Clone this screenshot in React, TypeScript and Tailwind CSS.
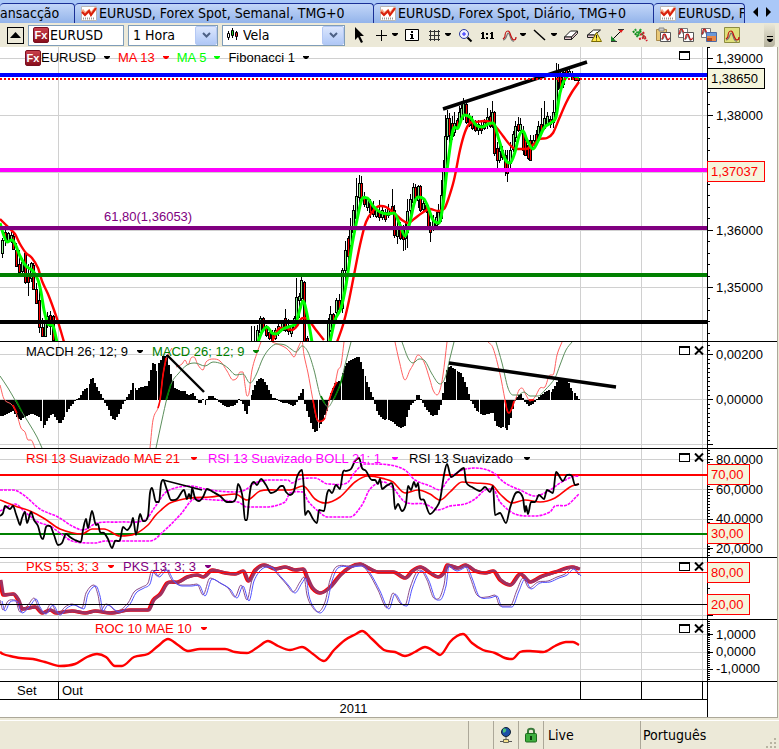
import React from "react";

type Pt = [number, number];

// parse "x,y x,y" strings into points
const pts = (s: string): Pt[] =>
  s
    .trim()
    .split(/\s+/)
    .map((p) => p.split(",").map(Number) as Pt);

// x, high, low, body top, body bottom, 1 = up / 0 = down
const CANDLES: number[][] = [
  [2, 238, 258, 240, 253, 1],
  [5, 228, 246, 232, 240, 0],
  [8, 232, 242, 233, 240, 1],
  [11, 232, 243, 235, 241, 1],
  [13, 231, 250, 236, 249, 0],
  [16, 243, 267, 250, 266, 0],
  [19, 250, 273, 264, 272, 0],
  [22, 258, 273, 262, 271, 1],
  [25, 251, 284, 253, 282, 0],
  [28, 264, 296, 275, 282, 0],
  [31, 262, 282, 263, 278, 1],
  [33, 263, 290, 265, 289, 0],
  [36, 283, 304, 289, 303, 0],
  [39, 290, 333, 300, 327, 0],
  [42, 318, 336, 327, 336, 0],
  [45, 320, 337, 322, 336, 1],
  [47, 312, 328, 316, 325, 1],
  [50, 311, 335, 315, 326, 0],
  [53, 315, 342, 316, 340, 0],
  [251, 326, 342, 341, 342, 1],
  [254, 326, 342, 341, 342, 1],
  [257, 325, 342, 330, 341, 1],
  [260, 316, 338, 318, 332, 1],
  [263, 317, 330, 318, 329, 0],
  [266, 325, 337, 328, 335, 0],
  [269, 328, 340, 332, 338, 0],
  [272, 330, 342, 334, 341, 0],
  [275, 328, 340, 330, 338, 1],
  [278, 324, 336, 326, 333, 1],
  [282, 321, 331, 322, 330, 1],
  [285, 309, 332, 318, 330, 0],
  [288, 319, 335, 326, 331, 0],
  [291, 325, 337, 326, 333, 1],
  [294, 316, 330, 318, 328, 1],
  [296, 278, 326, 297, 322, 1],
  [299, 293, 318, 296, 300, 1],
  [301, 276, 301, 280, 298, 1],
  [304, 281, 342, 282, 341, 0],
  [307, 336, 342, 338, 342, 0],
  [328, 318, 342, 320, 342, 1],
  [330, 306, 332, 314, 330, 1],
  [333, 313, 324, 314, 320, 0],
  [336, 298, 322, 300, 312, 1],
  [339, 294, 312, 300, 309, 0],
  [342, 268, 313, 270, 308, 1],
  [345, 241, 284, 250, 270, 1],
  [348, 236, 261, 238, 256, 0],
  [350, 218, 250, 228, 245, 1],
  [353, 205, 240, 210, 232, 1],
  [356, 178, 222, 196, 218, 1],
  [359, 175, 205, 183, 197, 1],
  [361, 176, 203, 183, 198, 0],
  [364, 192, 207, 198, 204, 0],
  [367, 197, 211, 199, 207, 1],
  [370, 199, 218, 203, 212, 0],
  [373, 201, 217, 206, 214, 0],
  [376, 207, 218, 210, 216, 1],
  [379, 200, 221, 212, 217, 0],
  [382, 206, 220, 210, 217, 1],
  [385, 209, 222, 212, 219, 0],
  [388, 204, 218, 209, 215, 1],
  [392, 189, 214, 206, 211, 0],
  [394, 205, 238, 210, 235, 0],
  [397, 220, 244, 226, 236, 1],
  [400, 222, 240, 228, 238, 0],
  [403, 225, 251, 230, 239, 0],
  [405, 222, 250, 228, 238, 1],
  [407, 199, 248, 211, 232, 1],
  [410, 194, 215, 199, 210, 1],
  [413, 183, 208, 187, 202, 1],
  [415, 184, 203, 187, 197, 0],
  [418, 185, 208, 186, 200, 1],
  [420, 185, 212, 186, 210, 0],
  [423, 199, 213, 203, 209, 1],
  [426, 203, 213, 205, 211, 0],
  [428, 205, 229, 210, 227, 0],
  [430, 222, 242, 226, 232, 0],
  [433, 215, 231, 220, 228, 1],
  [436, 212, 227, 217, 225, 1],
  [438, 204, 225, 212, 222, 1],
  [441, 180, 222, 195, 218, 1],
  [443, 160, 200, 170, 198, 1],
  [445, 115, 182, 136, 180, 1],
  [447, 110, 140, 118, 136, 1],
  [449, 113, 145, 118, 135, 0],
  [452, 116, 140, 123, 136, 0],
  [454, 112, 136, 123, 132, 1],
  [457, 118, 130, 120, 127, 0],
  [459, 106, 125, 112, 122, 1],
  [461, 105, 122, 108, 118, 1],
  [463, 98, 120, 103, 115, 1],
  [466, 102, 124, 104, 122, 0],
  [469, 113, 127, 117, 125, 0],
  [472, 116, 130, 120, 128, 0],
  [475, 120, 132, 122, 130, 0],
  [478, 120, 135, 124, 130, 1],
  [481, 122, 134, 125, 130, 0],
  [484, 119, 130, 122, 128, 1],
  [487, 108, 129, 117, 124, 1],
  [490, 110, 128, 116, 126, 0],
  [492, 101, 128, 112, 124, 1],
  [494, 111, 156, 112, 153, 0],
  [497, 142, 168, 148, 160, 0],
  [499, 140, 163, 151, 160, 1],
  [502, 146, 160, 150, 157, 0],
  [505, 150, 176, 155, 170, 0],
  [507, 150, 182, 162, 173, 0],
  [510, 142, 168, 150, 163, 1],
  [513, 131, 152, 134, 149, 1],
  [515, 121, 142, 126, 137, 1],
  [518, 117, 132, 124, 130, 0],
  [520, 118, 133, 124, 130, 1],
  [523, 126, 155, 133, 150, 0],
  [525, 136, 156, 140, 155, 0],
  [528, 142, 160, 145, 158, 0],
  [530, 135, 161, 140, 160, 0],
  [533, 135, 150, 140, 147, 1],
  [536, 130, 145, 134, 142, 0],
  [538, 121, 138, 126, 134, 1],
  [541, 108, 136, 124, 132, 0],
  [544, 101, 130, 118, 128, 1],
  [547, 112, 126, 116, 123, 1],
  [550, 116, 128, 119, 124, 0],
  [553, 100, 128, 112, 122, 1],
  [556, 63, 116, 74, 112, 1],
  [558, 64, 90, 74, 82, 0],
  [560, 72, 91, 74, 88, 0],
  [563, 70, 88, 72, 84, 1],
  [566, 68, 76, 70, 75, 0],
  [569, 69, 76, 71, 75, 1],
  [572, 71, 80, 73, 79, 0],
  [575, 76, 81, 77, 80, 0],
  [578, 76, 83, 78, 80, 0],
];

const MA13 = [
  "0,219 5,224 10,229 15,234 20,244 26,253 32,258 38,268 42,281 48,294 54,310 59,325 64,342",
  "272,342 276,333 280,328 286,328 292,330 297,326 301,319 305,318 310,322 316,330 324,340",
  "337,342 343,325 348,305 354,275 360,245 366,222 373,211 380,206 386,207 395,214 402,220 408,223 414,219 422,213 430,209 438,211 444,209 448,200 454,180 460,150 465,132 470,123 476,122 484,121 490,122 496,127 503,136 510,145 516,149 526,149 534,144 540,139 547,138 553,133 559,119 566,103 572,92 579,82",
];
const MA5 = [
  "0,223 3,233 7,242 12,240 16,246 20,256 26,266 33,271 38,280 41,292 44,310 48,324 53,326 57,342",
  "258,342 262,332 267,327 272,333 276,334 283,329 291,326 296,323 300,309 303,301 307,314 312,342",
  "330,342 335,320 341,308 346,285 352,245 358,215 362,199 367,198 373,206 380,212 388,214 394,213 400,225 405,236 410,222 414,204 418,197 424,199 428,207 433,220 439,223 443,205 447,170 453,130 458,128 464,115 470,117 476,125 482,127 488,124 493,123 499,140 505,159 510,163 515,152 519,136 523,131 527,140 533,149 538,141 544,128 552,122 556,117 560,93 565,79 571,75 579,78",
];

const HIST = pts(`0,415 3,415 8,412 13,410 18,418 21,419 24,416 32,412 35,414 40,417 43,427 50,415 53,413 58,420 60,424
  65,416 68,409 75,400 80,397 84,389 88,388 90,380 93,378 96,385 102,396 104,400 109,409 112,418 115,419 119,413 122,405
  126,398 130,393 133,383 136,391 140,387 148,386 152,365 154,361 157,371 158,364 160,362 163,356 167,355 169,365 172,378
  175,388 180,391 185,391 188,396 193,393 196,398 200,403 203,399 205,404 208,396 213,396 217,399 222,403 228,406 235,404
  240,398 244,405 246,414 248,411 250,398 252,392 257,381 262,377 266,383 270,392 273,398 278,399 283,402 288,402 292,405
  296,403 299,396 303,389 304,400 307,410 313,428 316,432 319,427 322,421 327,410 330,395 335,383 339,381 341,382 344,368
  348,361 354,358 359,357 362,365 366,379 371,392 374,400 378,413 384,419 388,418 392,420 397,425 402,427 405,425 408,412
  411,404 415,400 418,393 421,399 427,409 432,415 437,414 441,404 444,388 447,370 450,365 456,370 462,374 467,387 471,400
  477,410 483,414 488,413 493,412 496,424 500,427 504,426 507,429 510,421 513,408 515,400 518,395 521,394 524,400 529,405
  534,402 538,398 541,395 545,392 549,390 551,392 555,386 558,380 563,380 568,380 572,390 576,394 578,398 580,399`);

// columns where the bars leave a hairline gap
const HIST_GAPS = [42, 65, 88, 134, 157, 204, 250, 318, 341, 364, 387, 456, 479, 504, 550, 573];

const MACD_LINE = [
  "0,385 4,399 12,405 17,415 21,428 25,432 28,440 31,440 35,448",
  "150,448 153,420 158,408 160,400 163,375 167,357 172,348",
  "176,367 182,364 185,360 188,365 191,358 194,357 198,365 203,370 206,362 213,359 220,361 227,371 233,380 237,378 240,372 243,372 245,385 247,396 249,393 252,370 258,350 261,342",
  "272,342 280,345 286,348 290,352 294,357 298,348 302,341 304,355 308,373 312,395 317,420 322,421 325,418 330,398 335,384 338,370 341,365 344,342",
  "395,342 399,360 405,380 410,370 413,365 418,355 424,362 430,380 433,390 437,395 440,390 443,375 447,342",
  "488,342 493,348 500,374 505,400 507,410 509,413 512,408 516,398 519,390 522,388 526,395 530,401 535,397 540,388 545,387 550,375 553,375 557,355 562,342",
];
const MACD_SIGNAL = [
  "0,376 8,388 15,400 22,412 30,425 37,437 42,448",
  "156,448 162,420 167,398 172,382 178,374 187,365 195,363 205,366 213,362 222,364 228,368 236,375 243,374 250,383 256,375 263,358 270,348 277,344 285,345 291,349 296,352 302,346 308,352 314,370 320,395 325,404 328,407 333,400 340,385 345,365 351,342",
  "402,342 408,358 413,363 419,359 425,361 432,374 440,384 445,378 450,358 454,342",
  "496,342 502,363 508,388 513,395 518,395 524,392 530,396 538,396 545,390 555,378 560,365 566,350 572,342",
];
// stretches where the lines run over the bars
const MACD_BOLD = [
  "13,405 17,413",
  "158,408 160,400 163,375 166,358",
  "313,400 317,419 322,421 325,418",
  "329,400 333,389 337,382",
  "505,400 507,410 509,413 512,408 514,401",
  "529,400 534,400",
];
const SIGNAL_BOLD = ["16,400 22,412", "166,400 171,384", "321,396 325,404", "334,399 340,385 343,375"];

const RSI = `0,516 3,513 5,506 10,509 13,506 16,514 18,520 20,525 22,518 25,512 27,523 31,512 34,520 38,526 41,537 43,539 46,527
  50,526 54,535 58,545 62,543 66,534 70,537 75,540 81,542 83,530 86,519 88,528 92,511 96,525 98,524 100,532 104,533 108,539
  112,548 115,541 120,540 123,527 127,530 131,525 133,518 136,535 140,514 143,521 148,516 150,493 152,488 156,502 159,502
  161,484 163,480 167,490 171,500 177,499 184,490 187,499 189,494 191,499 192,488 195,498 199,501 203,497 207,489 213,492
  220,496 227,502 232,502 236,498 238,484 241,490 243,500 245,520 247,520 249,500 251,486 254,482 257,485 261,479 266,485
  271,493 276,491 281,486 283,486 286,492 290,495 294,491 297,477 302,470 304,490 305,515 308,511 313,519 317,523 319,510
  324,511 327,494 329,490 332,493 336,485 340,489 343,472 346,471 351,469 355,461 359,458 362,468 366,471 372,480 375,480
  378,484 380,479 382,489 388,485 393,486 395,509 398,504 402,511 406,504 408,486 411,490 414,482 416,487 418,483 420,498
  424,500 430,514 436,508 440,500 444,475 447,464 451,477 457,473 464,468 466,482 472,487 480,491 485,487 490,492 493,486
  495,515 500,513 506,523 510,508 515,494 518,492 523,498 525,512 526,506 528,514 531,502 535,502 539,495 544,499 547,490
  553,493 556,472 563,481 567,475 572,476 575,485 579,484`;
const RSI_MAE = `0,500 15,506 30,511 45,519 60,529 82,534 92,529 104,529 120,536 135,534 148,525 155,516 160,511 170,503 190,498
  210,497 235,494 247,500 260,491 275,490 290,490 303,486 315,499 325,503 340,497 355,482 368,476 385,479 393,482 405,493
  418,490 430,494 440,500 450,492 462,482 475,483 492,485 500,494 512,503 525,500 540,502 555,498 570,487 579,484`;
const BOLL_UP = `0,490 13,490 25,496 40,509 58,517 72,526 83,530 97,523 120,522 145,520 155,507 165,493 175,488 190,486 210,490
  235,492 245,490 255,483 270,480 288,480 292,483 300,479 315,478 328,484 347,483 355,472 365,464 390,465 405,470 415,480
  430,486 440,490 448,480 460,471 475,468 492,472 505,483 520,490 535,496 550,490 560,483 572,477 579,476`;
const BOLL_DOWN = `0,511 15,504 25,512 38,522 50,526 60,533 72,541 95,543 105,541 150,541 165,530 180,515 195,499 215,500 238,502
  247,507 265,507 285,502 290,493 303,492 308,501 318,511 328,517 350,517 362,505 370,489 383,482 393,488 405,502 425,504
  438,510 450,506 465,504 475,499 485,490 493,489 500,502 515,514 535,516 550,512 555,506 567,505 579,494`;

const PKS55 = `0,580 3,595 13,594 18,600 22,609 35,607 42,613 50,610 56,613 63,612 72,611 85,613 95,611 110,613 130,610 148,610
  153,600 160,594 167,583 178,582 187,577 197,575 203,577 212,570 225,573 235,574 243,571 248,581 255,570 264,565 275,569 285,567
  295,570 303,569 307,578 312,588 320,593 330,587 340,575 350,567 360,564 368,568 378,572 393,572 405,578 412,571 420,567
  430,573 438,577 444,572 447,565 458,568 465,565 475,571 485,573 493,571 500,580 510,585 520,574 530,582 540,577 555,572
  572,567 579,569`;
const PKS13 = `0,600 3,610 8,601 15,600 20,612 28,605 34,598 38,606 44,613 51,604 58,614 65,607 72,604 82,608 86,593 94,585
  98,595 101,610 106,604 117,611 128,603 134,592 142,587 148,583 152,570 157,576 165,569 172,580 180,585 190,585 197,584
  203,595 210,578 220,583 228,588 235,597 241,585 247,600 252,580 260,568 268,566 280,577 287,585 293,592 300,582 304,577
  307,595 311,605 318,612 325,602 330,580 336,567 350,566 360,565 368,572 378,590 387,608 393,593 400,603 405,605 410,588
  416,573 420,570 427,580 433,597 438,599 444,585 447,565 455,570 465,566 470,577 477,595 487,597 495,595 500,606 510,606
  517,590 523,578 529,588 538,582 548,581 557,577 565,574 572,568 579,575`;

const ROC = `0,652 3,654 10,656 20,658 33,659 45,662 60,666 75,664 87,657 97,654 106,657 115,666 122,666 134,657 148,654
  158,646 168,639 178,645 188,651 200,649 215,649 225,649 235,652 247,653 258,647 268,641 278,646 290,650 302,647 313,654
  324,661 334,650 345,640 356,634 362,631 372,639 384,650 395,652 405,656 415,652 425,647 435,652 440,655 450,642 457,636
  463,634 472,643 483,650 495,653 505,658 512,659 520,652 530,651 543,652 555,646 566,642 573,642 579,645`;

const valueAt = (list: Pt[], x: number) => {
  const i = list.findIndex((p) => p[0] >= x);
  if (i <= 0) return list[0][1];
  const [x0, y0] = list[i - 1];
  const [x1, y1] = list[i];
  return y0 + ((y1 - y0) * (x - x0)) / (x1 - x0);
};

const range = (from: number, to: number, step: number) => {
  const out: number[] = [];
  for (let v = from; v <= to; v += step) out.push(v);
  return out;
};

// soft curve through the points, control handles held at a third of each step
const curve = (s: string) => {
  const p = pts(s);
  const slope = (i: number) => {
    const a = p[Math.max(i - 1, 0)];
    const b = p[Math.min(i + 1, p.length - 1)];
    const inner = i > 0 && i < p.length - 1;
    // flat at peaks and valleys so the curve never overshoots
    if (inner && (p[i][1] - a[1]) * (b[1] - p[i][1]) <= 0) return 0;
    return (b[1] - a[1]) / (b[0] - a[0]);
  };
  let d = `M${p[0][0]} ${p[0][1]}`;
  for (let i = 1; i < p.length; i++) {
    const [x0, y0] = p[i - 1];
    const [x1, y1] = p[i];
    const h = (x1 - x0) / 3;
    d += `C${x0 + h} ${y0 + slope(i - 1) * h} ${x1 - h} ${y1 - slope(i) * h} ${x1} ${y1}`;
  }
  return d;
};

const histPath = () => {
  let d = "M0 399.5";
  range(0, 578, 2).forEach((x) => {
    const y = Math.round(valueAt(HIST, x + 1));
    d += `V${y > 399 ? y + 1 : y}H${x + 2}`;
  });
  return d + "V399.5Z";
};

function Line({ d, color, w = 1, dash }: { d: string; color: string; w?: number; dash?: string }) {
  return <path d={curve(d)} fill="none" stroke={color} strokeWidth={w} strokeDasharray={dash} strokeLinejoin="round" />;
}

function Level({ y, color, w = 1, dash }: { y: number; color: string; w?: number; dash?: string }) {
  return (
    <line x1="0" x2="707" y1={y} y2={y} stroke={color} strokeWidth={w} strokeDasharray={dash} shapeRendering="crispEdges" />
  );
}

function Caret() {
  return (
    <svg width="6" height="4" viewBox="0 0 6 4" fill="currentColor" className="shrink-0">
      <path d="M0 0h6v1L4 3H2L0 1z" />
    </svg>
  );
}

function FxLogo() {
  return (
    <span
      aria-hidden="true"
      className="flex h-4 w-4 shrink-0 items-center justify-center rounded-xs border border-[#7a1020] bg-linear-to-b from-[#c9404c] to-[#8a0d1c] font-['Liberation_Sans',sans-serif] text-[11px] leading-[14px] font-bold text-white"
    >
      Fx
    </span>
  );
}

type Series = { label: string; color: string; icon?: boolean };

function Legend({ items, className }: { items: Series[]; className: string }) {
  return (
    <div className={`absolute flex h-4 items-center whitespace-nowrap ${className}`}>
      {items.map((s) => (
        <button key={s.label} type="button" className={`flex items-center gap-[inherit] leading-4 ${s.color}`}>
          <span className="flex items-center">
            {s.icon && <FxLogo />}
            {s.label}
          </span>
          <Caret />
        </button>
      ))}
    </div>
  );
}

function PaneButtons({ closable = true }: { closable?: boolean }) {
  return (
    <div className={`absolute top-1 flex gap-1 ${closable ? "right-[3px]" : "right-[17px]"}`}>
      <button type="button" aria-label="Maximizar">
        <svg width="11" height="9" viewBox="0 0 11 9" shapeRendering="crispEdges">
          <path d="M.5 1v7.5h10V1" fill="#fff" stroke="#000" />
          <path d="M0 1h11" stroke="#000" strokeWidth="2" />
        </svg>
      </button>
      {closable && (
        <button type="button" aria-label="Fechar">
          <svg width="10" height="9" viewBox="0 0 10 9">
            <path d="M1 .5l8 8M9 .5l-8 8" stroke="#000" strokeWidth="2" />
          </svg>
        </button>
      )}
    </div>
  );
}

type Tag = { y: number; text: string; red?: boolean; w: number };
type PaneProps = {
  top: number;
  height: number;
  size: string;
  rows: number[];
  labels: [number, string][];
  ticks: number[];
  tags?: Tag[];
  overlay: React.ReactNode;
  children: React.ReactNode;
};

// one chart pane: plot on the left, value axis on the right
function Pane({ top, height, size, rows, labels, ticks, tags = [], overlay, children }: PaneProps) {
  return (
    <section className="flex border-b border-black">
      <div className="relative min-w-0 flex-1">
        <svg viewBox={`0 ${top} 707 ${height}`} preserveAspectRatio="none" className={`block w-full ${size}`}>
          {rows.map((y) => (
            <Level key={y} y={y + 0.5} color="#d0d0d0" />
          ))}
          {[58, 580, 641, 702].map((x) => (
            <path key={x} d={`M${x + 0.5} ${top}v${height}`} stroke="#d0d0d0" shapeRendering="crispEdges" />
          ))}
          {children}
        </svg>
        {overlay}
      </div>
      <svg viewBox={`0 ${top} 70 ${height}`} className={`block w-[70px] shrink-0 ${size}`} fontSize="13">
        <g stroke="#000" shapeRendering="crispEdges">
          <path d={`M.5 ${top}v${height}`} />
          {ticks.map((y) => (
            <path key={y} d={`M1 ${Math.round(y) + 0.5}h2`} />
          ))}
          {rows.map((y) => (
            <path key={y} d={`M1 ${y + 0.5}h5`} />
          ))}
        </g>
        {labels.map(([y, t]) => (
          <text key={t} x="9" y={y + 5}>
            {t}
          </text>
        ))}
        {tags.map((t) => (
          <g key={t.text}>
            <rect
              x="0.5"
              y={t.y - 9.5}
              width={t.w}
              height="20"
              fill="#f5f5dc"
              stroke={t.red ? "#f00" : "#000"}
              shapeRendering="crispEdges"
            />
            <text x="4" y={t.y + 5} fill={t.red ? "#f00" : "#000"}>
              {t.text}
            </text>
          </g>
        ))}
      </svg>
    </section>
  );
}

function ChartIcon() {
  return (
    <svg width="16" height="15" viewBox="0 0 16 15" className="shrink-0">
      <path d="M.5.5h15v14H.5z" fill="#fff" stroke="#b8b8b8" />
      <path d="M2 12.5h12" stroke="#999" strokeDasharray="1 1" strokeWidth="2" />
      <path d="M1 4l3 4 4-3 2 3 5-6" fill="none" stroke="#f7a080" strokeWidth="3" />
      <path d="M1 6l3 3 4-4 2 4 5-7" fill="none" stroke="#d8200c" strokeWidth="2" />
    </svg>
  );
}

function TabItem({ label, icon = true, className }: { label: string; icon?: boolean; className: string }) {
  return (
    <button
      type="button"
      className={`flex h-5 items-center gap-[2px] overflow-hidden rounded-t-sm border-t border-r border-[#1a2f96] bg-linear-to-b from-[#c3d6f8] to-[#93b4ea] leading-[19px] whitespace-nowrap ${className}`}
    >
      {icon && <ChartIcon />}
      {label}
    </button>
  );
}

const wave = "M1 10c1-1 2-1 2-3s1-5 3-5 2 3 3 5 1 4 3 4 2-2 2-3";
const wave2 = "M1 11c2 0 3-2 4-5s2-2 3 1 2 6 4 5";

function Wave({ x = 0, y = 0, s = 1 }: { x?: number; y?: number; s?: number }) {
  return (
    <g transform={`translate(${x} ${y}) scale(${s})`} fill="none" strokeWidth={1.2 / s}>
      <path d={wave2} stroke="#777" />
      <path d={wave} stroke="#c01010" />
    </g>
  );
}

type Tool = { name: string; menu?: boolean; art: React.ReactNode };

const DRAW_TOOLS: Tool[] = [
  { name: "Cursor", art: <path d="M4 0v13l3-3 3 6 2-1-3-6h4z" fill="#000" /> },
  { name: "Cruz", menu: true, art: <path d="M3 8.5h11M8.5 3v11" stroke="#000" shapeRendering="crispEdges" /> },
  {
    name: "Info",
    art: (
      <g>
        <path d="M1.5 2.5h13v11h-13z" fill="#fff" stroke="#000" />
        <path d="M7 4h2v2H7zM6 7h3v4h1v1H6v-1h1V8H6z" fill="#000" />
      </g>
    ),
  },
  {
    name: "Grelha",
    menu: true,
    art: <path d="M4.5 3v11M8.5 3v11M12.5 3v11M3 4.5h11M3 8.5h11M3 12.5h11" stroke="#333" shapeRendering="crispEdges" />,
  },
  {
    name: "Zoom",
    art: (
      <g fill="none">
        <circle cx="7" cy="7" r="4.5" fill="#eef" stroke="#2a3a9c" />
        <path d="M5 7h4M7 5v4" stroke="#22f" />
        <path d="M10.5 10.5l4 4" stroke="#000" strokeWidth="2" />
      </g>
    ),
  },
  {
    name: "Escala",
    art: <path d="M3 5h2v7H3zM2 6h1v1H2zM2 11h4v1H2zM7 6h2v2H7zM7 10h2v2H7zM12 5h2v7h-2zM11 6h1v1h-1zM11 11h4v1h-4z" fill="#000" />,
  },
  { name: "Indicadores", menu: true, art: <Wave x={1} y={2} /> },
  { name: "Linha", menu: true, art: <path d="M2 3l11 10" stroke="#000" strokeWidth="1.5" /> },
];

const EDIT_TOOLS: Tool[] = [
  {
    name: "Apagar",
    art: (
      <g stroke="#222" strokeLinejoin="round">
        <path d="M1.5 10l6-6h7l-6 6z" fill="#fff" />
        <path d="M1.5 10v2.5h7V10zM8.5 12.5l6-6V4l-6 6z" fill="#e8c8d0" />
      </g>
    ),
  },
  {
    name: "Apagar tudo",
    art: (
      <g stroke="#222" strokeLinejoin="round">
        <path d="M1.5 8l6-5h7l-6 5z" fill="#fff" />
        <path d="M1.5 8v2.5h7V8z" fill="#e8c8d0" />
        <path d="M10.5 5.5l5 9h-10z" fill="#ffe94a" stroke="#7a6a00" />
        <path d="M10.5 8v3.5M10.5 12.5v1" />
      </g>
    ),
  },
  {
    name: "Ajustar",
    art: (
      <g>
        <path d="M4 12l8-8" stroke="#000" />
        <path d="M9 2h6l-3 4z" fill="#e01818" />
        <path d="M2 15V9l5 5z" fill="#188a28" />
        <path d="M9 2.5h6M2 14.5h6" stroke="#333" />
      </g>
    ),
  },
  {
    name: "Comparar",
    art: (
      <g fill="none" strokeWidth="2" strokeDasharray="2 1">
        <path d="M1 4l4 5 3-5 5 8" stroke="#118a1e" />
        <path d="M3 2l4 7M9 2l-3 5" stroke="#20a030" />
        <path d="M8 8l5-3M7 12l7-2M11 8l4 6" stroke="#d01c2c" />
      </g>
    ),
  },
  {
    name: "Colar",
    art: (
      <g>
        <path d="M1.5 2.5h10v11h-10z" fill="#e8c878" stroke="#a88848" />
        <path d="M4 1h5v3H4z" fill="#ccc" stroke="#888" />
        <path d="M5.5 5.5h10v9h-10z" fill="#fff" stroke="#555" />
        <Wave x={6} y={6} s={0.6} />
      </g>
    ),
  },
  {
    name: "Copiar",
    art: (
      <g>
        <path d="M.5 1.5h9v9h-9z" fill="#fff" stroke="#777" />
        <Wave x={0} y={1} s={0.6} />
        <path d="M5.5 5.5h10v9h-10z" fill="#fff" stroke="#555" />
        <Wave x={6} y={6} s={0.6} />
      </g>
    ),
  },
  {
    name: "Copiar imagem",
    art: (
      <g>
        <path d="M.5 1.5h9v9h-9z" fill="#fff" stroke="#777" />
        <Wave x={0} y={1} s={0.6} />
        <path d="M5.5 5.5h10v9h-10z" fill="#e88848" stroke="#4a6aa8" />
        <path d="M6 6h9v3H6z" fill="#6a98d8" />
        <path d="M6 11h5v3H6z" fill="#b84a20" />
      </g>
    ),
  },
  {
    name: "Modelo",
    art: (
      <g>
        <path d="M.5.5h15v15H.5z" fill="#dfe07c" stroke="#8c8c40" />
        <Wave x={1} y={2} />
      </g>
    ),
  },
];

function ToolButton({ tool }: { tool: Tool }) {
  return (
    <button type="button" aria-label={tool.name} className="flex items-center gap-[3px]">
      <svg width="16" height="16" viewBox="0 0 16 16">
        {tool.art}
      </svg>
      {tool.menu && <Caret />}
    </button>
  );
}

function Picker({ label, value, children, className }: { label: string; value: string; children?: React.ReactNode; className: string }) {
  return (
    <div className={`relative flex h-[21px] shrink-0 items-center border border-[#7f9db9] bg-white ${className}`}>
      {children}
      <select
        aria-label={label}
        defaultValue={value}
        className="h-[19px] min-w-0 flex-1 appearance-none bg-transparent pl-1 leading-[19px] outline-none"
      >
        <option>{value}</option>
      </select>
      <span className="pointer-events-none absolute top-0 right-0 flex h-[19px] w-[22px] items-center justify-center rounded-xs border border-[#b4c8f4] bg-linear-to-b from-[#dbe6fd] to-[#b0c8f6]">
        <svg width="9" height="6" viewBox="0 0 9 6">
          <path d="M1 1l3.5 3.5L8 1" fill="none" stroke="#4d6185" strokeWidth="2" />
        </svg>
      </span>
    </div>
  );
}

function Toolbar() {
  return (
    <div className="flex h-6 items-center bg-[#ece9d8] pr-1 pl-[7px]">
      <button type="button" aria-label="Recolher" className="flex h-[17px] w-[17px] shrink-0 items-center justify-center border border-black">
        <svg width="11" height="6" viewBox="0 0 11 6">
          <path d="M0 6l5.5-6L11 6z" />
        </svg>
      </button>
      <div className="ml-1 flex h-[21px] w-[96px] shrink-0 items-center border border-[#7f9db9] bg-white pl-1">
        <FxLogo />
        <input
          aria-label="Instrumento"
          defaultValue="EURUSD"
          className="h-[19px] w-full min-w-0 pl-px leading-[19px] outline-none"
        />
      </div>
      <Picker label="Período" value="1 Hora" className="ml-1 w-[90px]" />
      <Picker label="Tipo" value="Vela" className="ml-1 w-[123px] pl-[3px]">
        <svg width="13" height="14" viewBox="0 0 13 14">
          <path d="M2.5 3v9M6.5 0v10M10.5 3v9" stroke="#000" />
          <path d="M1.5 5.5h2v4h-2z" fill="#fff" stroke="#000" />
          <path d="M5.5 2.5h2v5h-2z" fill="#2c2" stroke="#000" />
          <path d="M9.5 4.5h2v4h-2z" fill="#e22" stroke="#000" />
        </svg>
      </Picker>
      <div className="ml-[6px] flex items-center gap-[6px]">
        {DRAW_TOOLS.map((t) => (
          <ToolButton key={t.name} tool={t} />
        ))}
      </div>
      <div className="ml-[6px] flex items-center gap-[7px]">
        {EDIT_TOOLS.map((t) => (
          <ToolButton key={t.name} tool={t} />
        ))}
      </div>
      <button
        type="button"
        aria-label="Mais"
        className="ml-auto flex h-full w-[11px] flex-col items-center justify-end gap-[2px] rounded-r-sm bg-linear-to-b from-[#ece9d8] to-[#b5b29e] pb-1"
      >
        <span className="h-px w-[6px] bg-black" />
        <Caret />
      </button>
    </div>
  );
}

export default function App() {
  const ui = "font-['DejaVu_Sans_Condensed','Noto_Sans',sans-serif] text-[14px]";

  return (
    <div className="flex min-h-screen flex-col bg-[#ece9d8] font-['Liberation_Sans',Arial,sans-serif] text-[13px] text-black">
      <header className={ui}>
        <nav className="flex h-[23px] items-end bg-[#aac8f8]">
          <TabItem label="ansacção" icon={false} className="w-[75px] justify-start pl-0" />
          <TabItem label="EURUSD, Forex Spot, Semanal, TMG+0" className="w-[299px] pl-[6px]" />
          <TabItem label="EURUSD, Forex Spot, Diário, TMG+0" className="w-[280px] pl-[6px]" />
          <TabItem label="EURUSD, Forex Spot" className="min-w-0 flex-1 pl-[6px]" />
          <div className="flex h-full w-[34px] shrink-0 items-center justify-center gap-2">
            <button type="button" aria-label="Anterior">
              <svg width="5" height="10" viewBox="0 0 5 10">
                <path d="M5 0v10L0 5z" />
              </svg>
            </button>
            <button type="button" aria-label="Seguinte">
              <svg width="5" height="10" viewBox="0 0 5 10">
                <path d="M0 0v10l5-5z" />
              </svg>
            </button>
          </div>
        </nav>
        <Toolbar />
      </header>

      <main className="mr-px border-r border-b border-[#aca899] bg-white">
        <Pane
          top={47}
          height={294}
          size="h-[294px]"
          rows={[58, 115, 172, 230, 287]}
          labels={[
            [58, "1,39000"],
            [115, "1,38000"],
            [230, "1,36000"],
            [287, "1,35000"],
          ]}
          ticks={range(46.6, 340, 11.45)}
          tags={[
            { y: 78, text: "1,38650", w: 57 },
            { y: 171, text: "1,37037", red: true, w: 57 },
          ]}
          overlay={
            <>
              <Legend
                className="top-[3px] left-[25px] gap-2"
                items={[
                  { label: "EURUSD", color: "text-black", icon: true },
                  { label: "MA 13", color: "text-[#ff0000]" },
                  { label: "MA 5", color: "text-[#00ff00]" },
                  { label: "Fibonacci 1", color: "text-black" },
                ]}
              />
              <span className="absolute top-[162px] left-[104px] leading-4 text-[#800080]">61,80(1,36053)</span>
              <PaneButtons closable={false} />
            </>
          }
        >
          <g shapeRendering="crispEdges" stroke="#000">
            {CANDLES.map(([x, hi, lo, a, b, up]) => (
              <g key={x}>
                <path d={`M${x + 0.5} ${hi}V${lo}`} />
                <rect x={x - 0.5} y={a + 0.5} width="2" height={Math.max(b - a, 1)} fill={up ? "#90ee90" : "#ff0000"} />
              </g>
            ))}
          </g>
          {MA13.map((d) => (
            <Line key={d} d={d} color="#ff0000" w={2.4} />
          ))}
          {MA5.map((d) => (
            <Line key={d} d={d} color="#00ff00" w={3} />
          ))}
          <Line d="443,109 587,62" color="#000" w={3.5} />
          <Level y={75} color="#0000ff" w={4} />
          <Level y={79} color="#ff0000" w={2} dash="2 2" />
          <Level y={170} color="#ff00ff" w={4} />
          <Level y={228} color="#800080" w={4} />
          <Level y={275} color="#008000" w={4} />
          <Level y={322} color="#000" w={4} />
        </Pane>

        <Pane
          top={342}
          height={106}
          size="h-[106px]"
          rows={[354, 399, 444]}
          labels={[
            [354, "0,00200"],
            [399, "0,00000"],
          ]}
          ticks={range(345, 446, 4.5)}
          overlay={
            <>
              <Legend
                className="top-[2px] left-[26px] gap-[9px]"
                items={[
                  { label: "MACDH 26; 12; 9", color: "text-black" },
                  { label: "MACD 26; 12; 9", color: "text-[#008000]" },
                ]}
              />
              <PaneButtons />
            </>
          }
        >
          <path d={histPath()} shapeRendering="crispEdges" />
          {HIST_GAPS.map((x) => (
            <path key={x} d={`M${x + 0.5} 355v89`} stroke="#fff" shapeRendering="crispEdges" />
          ))}
          {MACD_LINE.map((d) => (
            <Line key={d} d={d} color="#ff6060" />
          ))}
          {MACD_SIGNAL.map((d) => (
            <Line key={d} d={d} color="#5c8f5c" />
          ))}
          {MACD_BOLD.map((d) => (
            <Line key={d} d={d} color="#ff0000" w={1.6} />
          ))}
          {SIGNAL_BOLD.map((d) => (
            <Line key={d} d={d} color="#008000" w={1.6} />
          ))}
          <Line d="167,355 204,392" color="#000" w={2.4} />
          <Line d="449,363 616,387" color="#000" w={3.4} />
        </Pane>

        <Pane
          top={449}
          height={108}
          size="h-[108px]"
          rows={[459, 489, 519, 548]}
          labels={[
            [459, "80,0000"],
            [489, "60,0000"],
            [518, "40,0000"],
            [548, "20,0000"],
          ]}
          ticks={range(450, 556, 3)}
          tags={[
            { y: 474, text: "70,00", red: true, w: 42 },
            { y: 533, text: "30,00", red: true, w: 42 },
          ]}
          overlay={
            <>
              <Legend
                className="top-[2px] left-[26px] gap-[11px]"
                items={[
                  { label: "RSI 13 Suavizado MAE 21", color: "text-[#ff0000]" },
                  { label: "RSI 13 Suavizado BOLL 21; 1", color: "text-[#ff00ff]" },
                  { label: "RSI 13 Suavizado", color: "text-black" },
                ]}
              />
              <PaneButtons />
            </>
          }
        >
          <Level y={475} color="#ff0000" w={2} />
          <Level y={534} color="#008000" w={2} />
          <Line d={BOLL_UP} color="#ff00ff" w={1.6} dash="3 1" />
          <Line d={BOLL_DOWN} color="#ff00ff" w={1.6} dash="3 1" />
          <Line d={RSI_MAE} color="#ff0000" w={1.6} />
          <Line d={RSI} color="#000" w={1.8} />
          <Line d="163,480 202,490" color="#000" w={1.6} />
        </Pane>

        <Pane
          top={558}
          height={61}
          size="h-[61px]"
          rows={[562, 615]}
          labels={[]}
          ticks={[588]}
          tags={[
            { y: 572, text: "80,00", red: true, w: 42 },
            { y: 604, text: "20,00", red: true, w: 42 },
          ]}
          overlay={
            <>
              <Legend
                className="top-[1px] left-[26px] gap-[9px]"
                items={[
                  { label: "PKS 55; 3; 3", color: "text-[#ff0000]" },
                  { label: "PKS 13; 3; 3", color: "text-[#800080]" },
                ]}
              />
              <PaneButtons />
            </>
          }
        >
          <Line d={PKS55} color="#ff0000" w={3.6} />
          <g transform="translate(1 0)">
            <Line d={PKS55} color="#a03060" w={3} />
          </g>
          <Line d={PKS13} color="#8a4a8a" />
          <g transform="translate(2 1)">
            <Line d={PKS13} color="#5050ff" />
          </g>
          <Level y={572.5} color="#ff0000" />
          <Level y={604.5} color="#000" />
        </Pane>

        <Pane
          top={620}
          height={61}
          size="h-[61px]"
          rows={[634, 652, 669]}
          labels={[
            [634, "1,0000"],
            [651, "0,0000"],
            [668, "-1,0000"],
          ]}
          ticks={range(621, 680, 2)}
          overlay={
            <>
              <Legend className="top-[1px] left-[95px] gap-[9px]" items={[{ label: "ROC 10 MAE 10", color: "text-[#ff0000]" }]} />
              <PaneButtons />
            </>
          }
        >
          <Line d={ROC} color="#ff0000" w={2.4} />
        </Pane>

        {/* time axis */}
        <div className="flex">
          <div className="min-w-0 flex-1">
            <div className="grid h-[18px] grid-cols-[59fr_522fr_61fr_61fr_4fr] divide-x divide-black border-b border-black leading-[17px]">
              <span className="pl-[17px]">Set</span>
              <span className="pl-[3px]">Out</span>
              <span />
              <span />
              <span />
            </div>
            <div className="h-[17px] text-center leading-[17px]">2011</div>
          </div>
          <div className="w-[70px] border-l border-black" />
        </div>
      </main>

      <footer className={`mt-[2px] flex flex-1 items-stretch border-t border-white ${ui}`}>
        <div className="flex-1" />
        <div className="w-[25px] border-l border-[#aca899]" />
        <div className="flex w-[25px] items-center justify-center border-l border-[#aca899]">
          <svg width="14" height="16" viewBox="0 0 14 16">
            <circle cx="7" cy="5" r="4.5" fill="#1c4fa8" stroke="#123" />
            <path d="M4 2c2-1 4 0 3 2s-3 2-3 1z" fill="#46c07a" />
            <path d="M7 10v3M1 14.5h12" stroke="#555" />
            <path d="M4.5 12.5h5v3h-5z" fill="#f4e08a" stroke="#665" />
          </svg>
        </div>
        <div className="flex w-[25px] items-center justify-center border-l border-[#aca899]">
          <svg width="14" height="16" viewBox="0 0 14 16">
            <path d="M4 7V4c0-3 6-3 6 0v3" fill="none" stroke="#3a7a3a" strokeWidth="2" />
            <rect x="1.5" y="6.5" width="11" height="8.5" rx="1" fill="#3fae3f" stroke="#1d6b1d" />
            <path d="M6 9h2v4H6z" fill="#0c3c0c" />
          </svg>
        </div>
        <div className="flex w-[97px] items-center border-l border-[#aca899] pl-1">Live</div>
        <div className="flex w-[139px] items-center justify-between border-l border-[#aca899] pr-[2px] pl-[2px]">
          Português
          <svg width="12" height="12" viewBox="0 0 12 12" fill="#b8b4a2" className="self-end">
            <path d="M9 1h2v2H9zM5 5h2v2H5zM9 5h2v2H9zM1 9h2v2H1zM5 9h2v2H5zM9 9h2v2H9z" />
          </svg>
        </div>
      </footer>
    </div>
  );
}
